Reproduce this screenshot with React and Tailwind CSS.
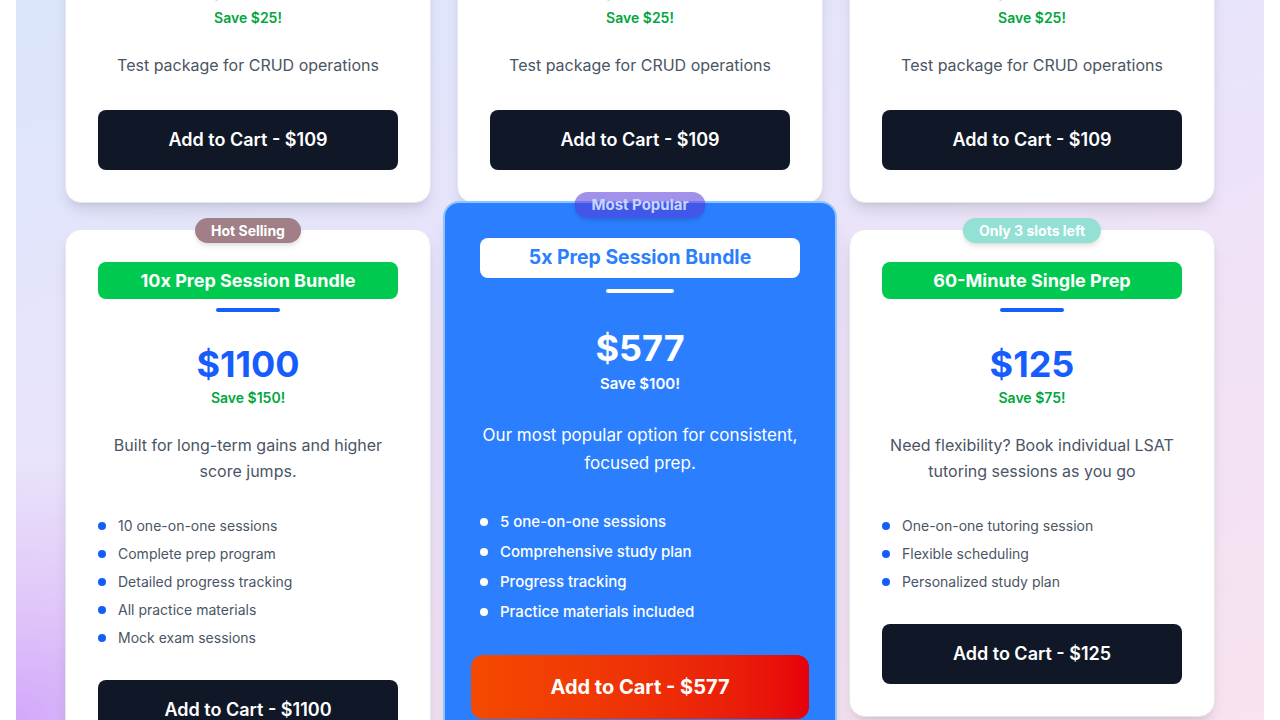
import { useState } from 'react';

const topCards = [
  { title: 'Test Package', price: 109, save: 25, desc: 'Test package for CRUD operations' },
  { title: 'Test Package', price: 109, save: 25, desc: 'Test package for CRUD operations' },
  { title: 'Test Package', price: 109, save: 25, desc: 'Test package for CRUD operations' },
];

function Badge({ label, className }) {
  return (
    <div
      className={`absolute left-1/2 -translate-x-1/2 rounded-full flex items-center font-bold whitespace-nowrap shadow-md ${className}`}
    >
      {label}
    </div>
  );
}

function PackageCard({ title, price, save, desc, features = [], badge, badgeClass }) {
  return (
    <div className="relative bg-white rounded-2xl border border-gray-200 shadow-lg px-8 pt-8 pb-8 text-center">
      {badge && <Badge label={badge} className={`-top-3 h-[25px] px-4 text-sm text-white ${badgeClass}`} />}
      <div className="h-[37px] rounded-lg bg-[#00c950] text-white text-lg font-bold flex items-center justify-center">
        {title}
      </div>
      <div className="mx-auto mt-[9px] w-16 h-1 rounded-full bg-[#155dfc]" />
      <div className="mt-8 text-4xl leading-10 font-bold text-[#155dfc]">${price}</div>
      <div className="mt-1 text-sm leading-5 font-semibold text-[#00a63e]">Save ${save}!</div>
      <p className="mt-6 text-base leading-[26px] text-[#4a5565]">{desc}</p>
      {features.length > 0 && (
        <ul className="mt-8 flex flex-col gap-2 text-left">
          {features.map((f) => (
            <li key={f} className="flex items-center gap-3 text-sm leading-5 text-[#4a5565]">
              <span className="w-2 h-2 rounded-full bg-[#155dfc] shrink-0" />
              {f}
            </li>
          ))}
        </ul>
      )}
      <button className="mt-8 w-full h-[60px] rounded-lg bg-[#101828] text-white text-lg font-semibold">
        Add to Cart - ${price}
      </button>
    </div>
  );
}

function FeaturedCard() {
  const features = [
    '5 one-on-one sessions',
    'Comprehensive study plan',
    'Progress tracking',
    'Practice materials included',
  ];
  return (
    <div className="relative z-10 -mt-[28px] -mx-[14px] bg-[#2b7fff] rounded-2xl border-2 border-[#8ec5ff] shadow-xl px-[26px] pt-[35px] pb-8 text-center text-white">
      <Badge
        label="Most Popular"
        className="-top-[11px] h-[26px] px-[17px] text-[15px] bg-[#5536d9]/55 text-[#c7d6ff]"
      />
      <div className="mx-[9px] h-10 rounded-lg bg-white text-[#2b7fff] text-[19.4px] font-bold flex items-center justify-center">
        5x Prep Session Bundle
      </div>
      <div className="mx-auto mt-[11px] w-[68px] h-1 rounded-full bg-white" />
      <div className="mt-[35px] text-4xl leading-10 font-bold">$577</div>
      <div className="mt-1.5 text-[15px] leading-5 font-semibold">Save $100!</div>
      <p className="mt-[27px] text-[17px] leading-7">Our most popular option for consistent, focused prep.</p>
      <ul className="mt-[34px] px-[9px] flex flex-col gap-2 text-left">
        {features.map((f) => (
          <li key={f} className="flex items-center gap-3 text-[15px] leading-[22px] font-medium">
            <span className="w-2 h-2 rounded-full bg-white shrink-0" />
            {f}
          </li>
        ))}
      </ul>
      <button className="mt-8 w-full h-16 rounded-xl bg-linear-to-r from-[#f54900] to-[#e7000b] text-xl font-bold text-white">
        Add to Cart - $577
      </button>
    </div>
  );
}

export default function App() {
  const [cart] = useState([]);
  return (
    <div className="h-[720px] overflow-hidden bg-white font-['Inter',sans-serif]">
      <div className="mx-4 h-full overflow-hidden bg-[radial-gradient(ellipse_340px_260px_at_0%_100%,#d2a8fa_0%,rgba(214,176,250,0.55)_45%,transparent_100%),linear-gradient(160deg,#dbe6fb_0%,#e7e4fb_35%,#f1e2f6_65%,#f8e3ef_100%)]">
        <div className="-mt-[151px] grid grid-cols-[366px_366px_366px] justify-center items-start gap-x-[26px] gap-y-[26px]" data-cart={cart.length}>
          {topCards.map((c, i) => (
            <PackageCard key={i} {...c} />
          ))}
          <PackageCard
            title="10x Prep Session Bundle"
            price={1100}
            save={150}
            desc="Built for long-term gains and higher score jumps."
            features={[
              '10 one-on-one sessions',
              'Complete prep program',
              'Detailed progress tracking',
              'All practice materials',
              'Mock exam sessions',
            ]}
            badge="Hot Selling"
            badgeClass="bg-[#a07f86]"
          />
          <FeaturedCard />
          <PackageCard
            title="60-Minute Single Prep"
            price={125}
            save={75}
            desc="Need flexibility? Book individual LSAT tutoring sessions as you go"
            features={['One-on-one tutoring session', 'Flexible scheduling', 'Personalized study plan']}
            badge="Only 3 slots left"
            badgeClass="bg-[#93e0d5]"
          />
        </div>
      </div>
    </div>
  );
}
